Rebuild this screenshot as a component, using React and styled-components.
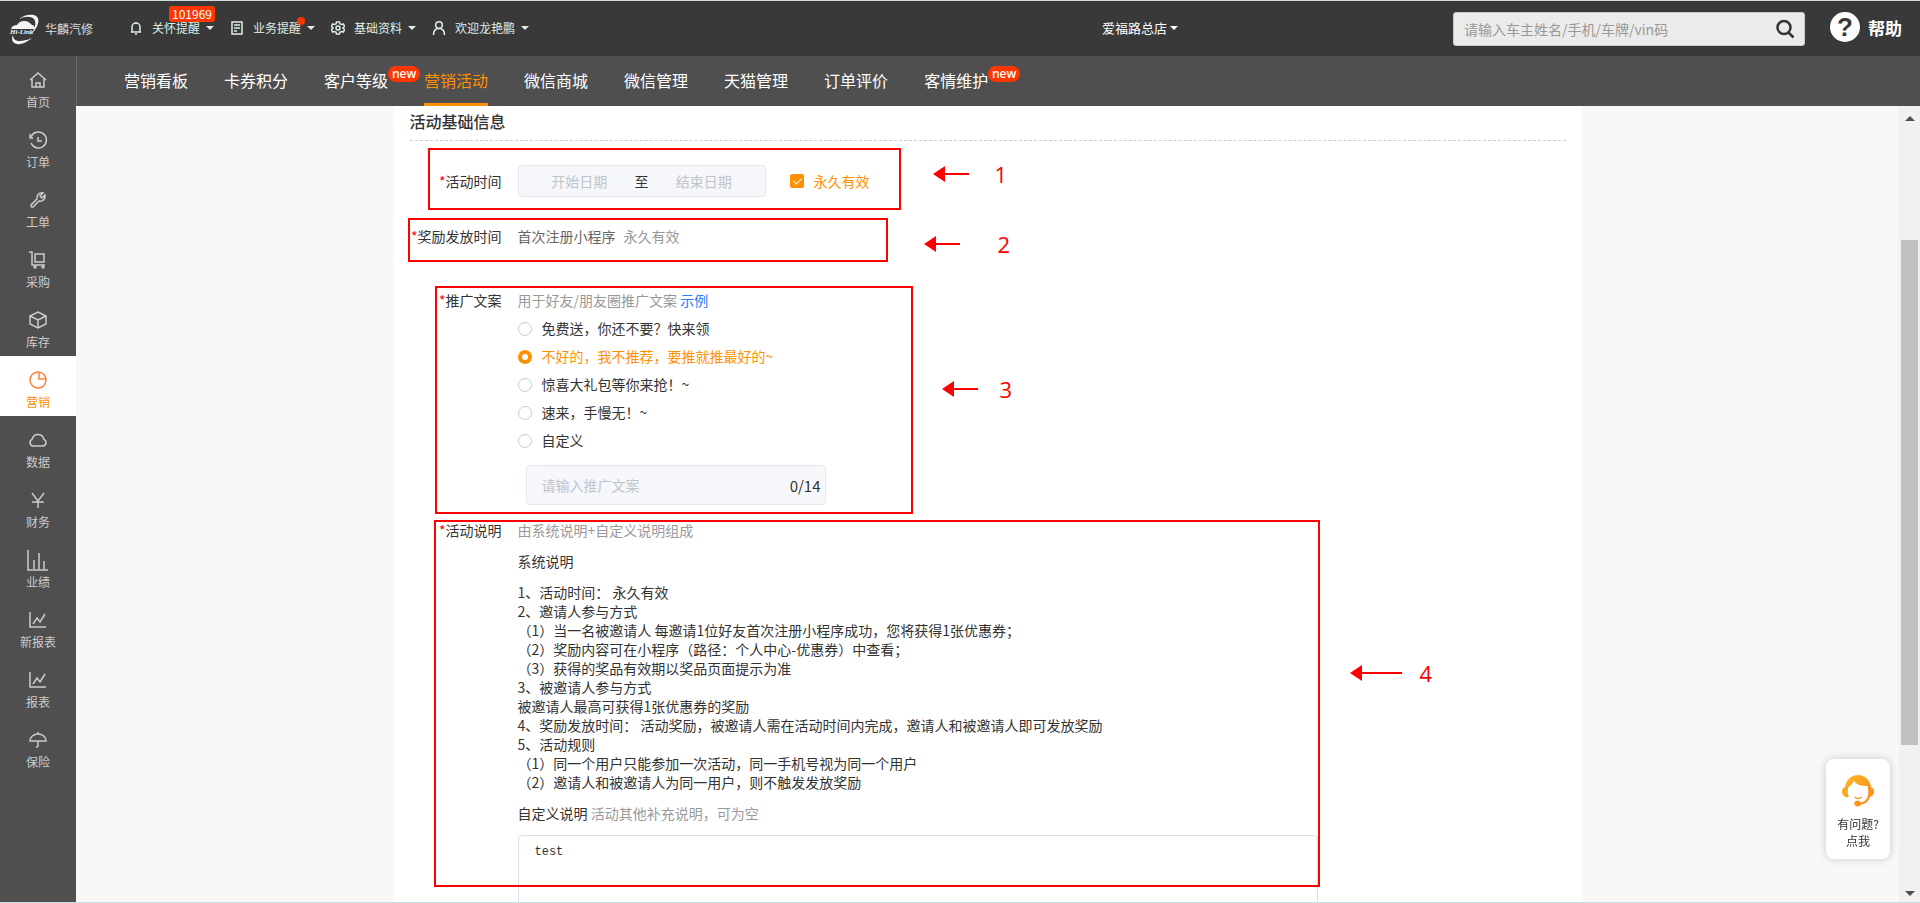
import React, { useState } from 'react';
import styled, { createGlobalStyle, css } from 'styled-components';

const ICONS = {
  home: (
    <>
      <path d="M1 9 9 2l8 7" />
      <path d="M3 8v8h12V8" />
      <path d="M7 16v-4h4v4" />
    </>
  ),
  order: (
    <>
      <path d="M2 6a8 8 0 1 1 0 6" />
      <path d="M1 3v4h3" />
      <path d="M9 6v4h4" />
    </>
  ),
  wrench: (
    <path d="M14 2a5 5 0 0 0-6 6l-6 6a1.6 1.6 0 0 0 2 2l6-6a5 5 0 0 0 6-6l-3 3-2-2z" />
  ),
  cart: (
    <>
      <path d="M0 1h3v13h13" />
      <path d="M6 3h9v8H6z" />
      <circle cx="6" cy="16" r="1" />
      <circle cx="14" cy="16" r="1" />
    </>
  ),
  box: (
    <>
      <path d="m9 1 8 4v8l-8 4-8-4V5z" />
      <path d="m1 5 8 4 8-4M9 9v8" />
    </>
  ),
  pie: (
    <>
      <circle cx="9" cy="9" r="8" />
      <path d="M10 1v7h7" />
    </>
  ),
  cloud: (
    <path d="M4 15a3.5 3.5 0 0 1-1-6.6C4 5 6.5 3.5 9 3.5s5 1.5 6 4.9A3.5 3.5 0 0 1 14 15z" />
  ),
  yen: <path d="m3 2 6 8 6-8M3 11h12M9 10v7" />,
  bars: <path d="M-1-1v20h20M5 18V9M10 18V2M15 18V10" />,
  chart: <path d="M1 1v15h16M4 13l4-6 3 4 5-8" />,
  umbrella: (
    <>
      <path d="M1 10a8 7 0 0 1 16 0z" />
      <path d="M9 1v2M9 10v5a1.5 1.5 0 0 1-2 1" />
    </>
  ),
};

const SIDE_ITEMS = [
  ['home', '首页'],
  ['order', '订单'],
  ['wrench', '工单'],
  ['cart', '采购'],
  ['box', '库存'],
  ['pie', '营销'],
  ['cloud', '数据'],
  ['yen', '财务'],
  ['bars', '业绩'],
  ['chart', '新报表'],
  ['chart', '报表'],
  ['umbrella', '保险'],
];

const TABS = [
  { name: '营销看板' },
  { name: '卡券积分' },
  { name: '客户等级', isNew: true },
  { name: '营销活动', active: true },
  { name: '微信商城' },
  { name: '微信管理' },
  { name: '天猫管理' },
  { name: '订单评价' },
  { name: '客情维护', isNew: true },
];

const SLOGANS = [
  '免费送，你还不要？快来领',
  '不好的，我不推荐，要推就推最好的~',
  '惊喜大礼包等你来抢！~',
  '速来，手慢无！~',
  '自定义',
];

const RULES = [
  '1、活动时间： 永久有效',
  '2、邀请人参与方式',
  '（1）当一名被邀请人 每邀请1位好友首次注册小程序成功，您将获得1张优惠券；',
  '（2）奖励内容可在小程序（路径：个人中心-优惠券）中查看；',
  '（3）获得的奖品有效期以奖品页面提示为准',
  '3、被邀请人参与方式',
  '被邀请人最高可获得1张优惠券的奖励',
  '4、奖励发放时间： 活动奖励，被邀请人需在活动时间内完成，邀请人和被邀请人即可发放奖励',
  '5、活动规则',
  '（1）同一个用户只能参加一次活动，同一手机号视为同一个用户',
  '（2）邀请人和被邀请人为同一用户，则不触发发放奖励',
];

export default function App() {
  const [forever, setForever] = useState(true);
  const [slogan, setSlogan] = useState(1);
  const [custom, setCustom] = useState('');
  const [remark, setRemark] = useState('test');

  return (
    <Page>
      <GlobalStyle />
      <Header />
      <Body>
        <SideBar>
          {SIDE_ITEMS.map(([icon, name]) => (
            <SideItem href="#" key={name} $active={icon === 'pie'}>
              <SideIcon viewBox="0 0 18 18">{ICONS[icon]}</SideIcon>
              {name}
            </SideItem>
          ))}
        </SideBar>
        <Content>
          <TabBar>
            {TABS.map((tab) => (
              <Tab href="#" key={tab.name} $active={tab.active}>
                {tab.name}
                {tab.isNew && <NewBadge>new</NewBadge>}
              </Tab>
            ))}
          </TabBar>
          <Main>
            <Scroll>
              <Panel>
                <Title>活动基础信息</Title>

                <Row $top={24}>
                  <Label $line={32} htmlFor="start">
                    <Star>*</Star>活动时间
                  </Label>
                  <TimeField>
                    <DateRange>
                      <DateInput id="start" placeholder="开始日期" disabled />
                      <span>至</span>
                      <DateInput
                        placeholder="结束日期"
                        aria-label="结束日期"
                        disabled
                      />
                    </DateRange>
                    <CheckLabel>
                      <Check
                        type="checkbox"
                        checked={forever}
                        onChange={(e) => setForever(e.target.checked)}
                      />
                      永久有效
                    </CheckLabel>
                  </TimeField>
                  <Frame $top={-17} $left={18} $width={473} $height={62} />
                  <Callout $top={-6} $left={523} $gap={26}>
                    <Arrow />1
                  </Callout>
                </Row>

                <Row $top={30}>
                  <Label as="span">
                    <Star>*</Star>奖励发放时间
                  </Label>
                  <Inline>
                    <Muted $dark>首次注册小程序</Muted>
                    <Muted>永久有效</Muted>
                  </Inline>
                  <Frame $top={-9} $left={-2} $width={480} $height={44} />
                  <Callout $top={2} $left={514} $gap={38}>
                    <Arrow />2
                  </Callout>
                </Row>

                <Row $top={45}>
                  <Label as="span">
                    <Star>*</Star>推广文案
                  </Label>
                  <div>
                    <Muted>用于好友/朋友圈推广文案</Muted> <Link href="#">示例</Link>
                    <RadioList>
                      {SLOGANS.map((text, i) => (
                        <RadioLabel key={text} $active={slogan === i}>
                          <Radio
                            type="radio"
                            name="slogan"
                            checked={slogan === i}
                            onChange={() => setSlogan(i)}
                          />
                          {text}
                        </RadioLabel>
                      ))}
                    </RadioList>
                    <CustomBox>
                      <CustomInput
                        placeholder="请输入推广文案"
                        aria-label="推广文案"
                        maxLength={14}
                        value={custom}
                        onChange={(e) => setCustom(e.target.value)}
                      />
                      <span>{custom.length}/14</span>
                    </CustomBox>
                  </div>
                  <Frame $top={-5} $left={25} $width={478} $height={228} />
                  <Callout $top={83} $left={532} $gap={22}>
                    <Arrow />3
                  </Callout>
                </Row>

                <Row $top={16}>
                  <Label htmlFor="remark">
                    <Star>*</Star>活动说明
                  </Label>
                  <Explain>
                    <Muted>由系统说明+自定义说明组成</Muted>
                    <p>系统说明</p>
                    <Rules>
                      {RULES.map((rule) => (
                        <li key={rule}>{rule}</li>
                      ))}
                    </Rules>
                    <p>
                      自定义说明 <Muted>活动其他补充说明，可为空</Muted>
                    </p>
                    <Remark
                      id="remark"
                      value={remark}
                      onChange={(e) => setRemark(e.target.value)}
                    />
                  </Explain>
                  <Frame $top={-1} $left={24} $width={886} $height={367} />
                  <Callout $top={137} $left={940} $gap={18}>
                    <Arrow $long />4
                  </Callout>
                </Row>
              </Panel>
            </Scroll>
            <ScrollBar>
              <ScrollButton aria-label="向上">
                <Caret $up />
              </ScrollButton>
              <Track>
                <Thumb />
              </Track>
              <ScrollButton aria-label="向下">
                <Caret />
              </ScrollButton>
            </ScrollBar>
          </Main>
        </Content>
      </Body>
      <Service>
        <ServiceIcon viewBox="0 0 32 32">
          <defs>
            <linearGradient id="hair" x1="0" y1="0" x2="1" y2="1">
              <stop offset="0" stopColor="#fbb829" />
              <stop offset="1" stopColor="#ff8519" />
            </linearGradient>
          </defs>
          <path
            fill="url(#hair)"
            d="M3 12C4 5 9 0 16 0s12 5 13 12c2 1 3 2 3 4.5S31 21 28 22c-2 5-5 7-9 7.5a3.5 3 0 1 1 0-2c3-.5 5-2 6.5-5.5 1-3 1-7 0-11-6 0-11-1-14-5.5C11 9 8 11 6.5 12c-1 3-1 7 .5 9.5l-2 1C1.500 21.5 0 19.5 0 16.500S1 13 3 12z"
          />
          <path
            d="M12.5 22c2 2 5 2 7 0"
            fill="none"
            stroke="#ff9a1f"
            strokeWidth="1.5"
          />
        </ServiceIcon>
        <span>有问题?</span>
        <span>点我</span>
      </Service>
    </Page>
  );
}

function Header() {
  return (
    <TopBar>
      <Logo>
        <LogoMark viewBox="0 0 32 32">
          <path d="M10 6C14 2 21 1 25 2c7 2 6 12-5 21 6-6 8-13 5-17-3-3-9-3-15 0z" />
          <path d="M2 16c1-3 3-4 6-4 2-3 4-4 7-4 4 0 6 2 8 4 2 0 3 2 3 4z" />
          <path d="M4 22c0 5 4 9 19 3-5 4-11 7-15 6-5-1-6-5-4-9z" />
          <text x="1" y="21">
            Hi-Link
          </text>
        </LogoMark>
        华麟汽修
      </Logo>
      <Menu>
        <MenuItem>
          <MenuIcon viewBox="0 0 14 14">
            <path d="M3 11V6a4 4 0 0 1 8 0v5M2 11h10M6 13h2M7 1v1" />
          </MenuIcon>
          关怀提醒
          <Caret />
          <CountBadge>101969</CountBadge>
        </MenuItem>
        <MenuItem>
          <MenuIcon viewBox="0 0 14 14">
            <path d="M2 1h10v12H2zM4 4h6M4 7h6M4 10h3" />
          </MenuIcon>
          业务提醒
          <Caret />
          <Dot />
        </MenuItem>
        <MenuItem>
          <MenuIcon viewBox="0 0 14 14">
            <path d="M5.5 1h3l.5 2 2 .5 1.5-.5 1 2.5L12 7l1.500 1.500-1 2.500-1.500-.5-2 .5-.5 2h-3L5 11l-2-.5-1.500.5-1-2.500L2 7 .5 5.500l1-2.500 1.500.5L5 3z" />
            <circle cx="7" cy="7" r="2" />
          </MenuIcon>
          基础资料
          <Caret />
        </MenuItem>
        <MenuItem>
          <MenuIcon viewBox="0 0 14 14">
            <circle cx="7" cy="4" r="3.3" />
            <path d="M1.5 14c0-4 2-6.5 5.5-6.500s5.500 2.500 5.500 6.500" />
          </MenuIcon>
          欢迎龙艳鹏
          <Caret />
        </MenuItem>
      </Menu>
      <Shop>
        爱福路总店
        <Caret />
      </Shop>
      <Search>
        <SearchInput
          placeholder="请输入车主姓名/手机/车牌/vin码"
          aria-label="搜索"
        />
        <SearchButton aria-label="搜索">
          <svg width="20" height="20" viewBox="0 0 20 20">
            <circle cx="9" cy="8.5" r="6.5" />
            <path d="m13.5 13.5 5 5" />
          </svg>
        </SearchButton>
      </Search>
      <Help href="#">
        <HelpMark>?</HelpMark>
        帮助
      </Help>
    </TopBar>
  );
}

function Arrow({ $long }) {
  const w = $long ? 52 : 36;
  return (
    <svg width={w} height="16" viewBox={`0 0 ${w} 16`}>
      <path d="M0 8 12 0v16z" fill="#f00" />
      <path d={`M10 8H${w}`} stroke="#f00" strokeWidth="2" />
    </svg>
  );
}

const GlobalStyle = createGlobalStyle`
  * {
    box-sizing: border-box;
  }
  body {
    margin: 0;
    font-family: "Noto Sans CJK SC", sans-serif;
    font-size: 14px;
    line-height: 19px;
    color: #333;
  }
  button, input {
    font-family: inherit;
  }
  a {
    text-decoration: none;
  }
`;

const Page = styled.div`
  display: flex;
  flex-direction: column;
  height: 100vh;
  border-top: 1px solid #d5dade;
  border-bottom: 1px solid #c5e3e3;
  overflow: hidden;
`;

const TopBar = styled.header`
  display: flex;
  align-items: center;
  flex: none;
  height: 55px;
  padding: 0 18px 0 9px;
  background-color: #393939;
  color: #ddeee8;
`;

const Logo = styled.div`
  display: flex;
  align-items: center;
  gap: 4px;
  width: 120px;
  font-size: 12px;
  color: #ddd;
`;

const LogoMark = styled.svg`
  width: 32px;
  height: 32px;
  fill: #f4f4f4;

  text {
    font: italic bold 7px 'Liberation Serif', serif;
  }
`;

const Menu = styled.nav`
  display: flex;
  gap: 16px;
  padding-bottom: 2px;
`;

const MenuItem = styled.button`
  position: relative;
  display: flex;
  align-items: center;
  padding: 0;
  border: 0;
  background: none;
  font-size: 12px;
  line-height: 20px;
  color: inherit;
`;

const MenuIcon = styled.svg`
  width: 14px;
  height: 14px;
  margin-right: 9px;
  fill: none;
  stroke: currentColor;
  stroke-width: 1.5;
`;

const Caret = styled.i`
  margin-left: 6px;
  border: 4px solid transparent;
  border-top-color: currentColor;
  border-bottom-width: 0;
  ${(props) =>
    props.$up &&
    css`
      transform: rotate(180deg);
    `}
`;

const CountBadge = styled.span`
  position: absolute;
  top: -12px;
  left: 40px;
  padding: 0 3px;
  border-radius: 3px;
  background-color: #ff3600;
  line-height: 16px;
  color: #fff;
`;

const Dot = styled.span`
  position: absolute;
  top: -1px;
  right: 10px;
  width: 8px;
  height: 8px;
  border-radius: 50%;
  background-color: #ff3600;
`;

const Shop = styled.button`
  display: flex;
  align-items: center;
  margin: 0 275px 0 auto;
  padding: 0 0 2px;
  border: 0;
  background: none;
  font-size: 13px;
  color: #fff;

  ${Caret} {
    margin-left: 3px;
  }
`;

const Search = styled.div`
  display: flex;
  align-items: center;
  width: 352px;
  height: 34px;
  border: 1px solid #ccc;
  border-radius: 3px;
  background-color: #ebebeb;
`;

const SearchInput = styled.input`
  flex: 1;
  min-width: 0;
  padding: 0 10px;
  border: 0;
  background: none;
  font-size: 14px;

  &::placeholder {
    color: #999;
  }
`;

const SearchButton = styled.button`
  display: flex;
  padding: 0 9px;
  border: 0;
  background: none;

  svg {
    fill: none;
    stroke: #333;
    stroke-width: 2.5;
  }
`;

const Help = styled.a`
  display: flex;
  align-items: center;
  gap: 8px;
  margin-left: 25px;
  padding-bottom: 3px;
  font-size: 17px;
  font-weight: bold;
  color: #fff;
`;

const HelpMark = styled.span`
  width: 30px;
  height: 30px;
  border-radius: 50%;
  background-color: #fff;
  font: bold 26px/30px 'Liberation Sans', sans-serif;
  text-align: center;
  color: #393939;
`;

const Body = styled.div`
  display: flex;
  flex: 1;
  min-height: 0;
`;

const SideBar = styled.nav`
  flex: none;
  width: 76px;
  background-color: #4f4f4f;
`;

const SideIcon = styled.svg`
  flex: none;
  width: 18px;
  height: 18px;
  overflow: visible;
  fill: none;
  stroke: currentColor;
  stroke-width: 1.5;
`;

const SideItem = styled.a`
  display: flex;
  flex-direction: column;
  align-items: center;
  gap: 3px;
  height: 60px;
  padding-top: 15px;
  font-size: 12px;
  line-height: 20px;
  color: ${(props) => (props.$active ? '#ff9100' : '#ccc')};
  background-color: ${(props) => (props.$active ? '#fff' : 'transparent')};

  ${SideIcon} {
    color: ${(props) => (props.$active ? '#ff7f3a' : 'inherit')};
  }
`;

const Content = styled.div`
  display: flex;
  flex-direction: column;
  flex: 1;
  min-width: 0;
`;

const TabBar = styled.nav`
  display: flex;
  flex: none;
  gap: 36px;
  height: 50px;
  padding-left: 47px;
  border-left: 1px solid #6b6b6b;
  background-color: #4f4f4f;
`;

const Tab = styled.a`
  position: relative;
  border-bottom: 3px solid ${(props) => (props.$active ? '#ff9100' : 'transparent')};
  font-size: 16px;
  line-height: 48px;
  color: ${(props) => (props.$active ? '#ff9100' : '#fff')};
`;

const NewBadge = styled.span`
  position: absolute;
  top: 10px;
  left: 100%;
  width: 32px;
  border-radius: 8px;
  background-color: #ff3600;
  font: 600 12px/16px 'Open Sans', sans-serif;
  text-align: center;
  color: #fff;
`;

const Main = styled.main`
  display: flex;
  flex: 1;
  min-height: 0;
  background-color: #f8f8f8;
`;

const Scroll = styled.div`
  flex: 1;
  overflow: hidden;
`;

const Panel = styled.section`
  max-width: 1188px;
  margin: 0 auto;
  padding: 3px 16px 0;
  background-color: #fff;
`;

const Title = styled.h2`
  margin: 0;
  padding-bottom: 7px;
  border-bottom: 1px dashed #ccc;
  font-size: 16px;
  font-weight: 500;
  line-height: 24px;
`;

const Row = styled.div`
  position: relative;
  display: flex;
  margin-top: ${(props) => props.$top}px;
`;

const Label = styled.label`
  flex: none;
  width: 92px;
  margin-right: 16px;
  line-height: ${(props) => props.$line || 19}px;
  text-align: right;
`;

const Star = styled.span`
  color: #f00;
`;

const TimeField = styled.div`
  display: flex;
  align-items: center;
  gap: 24px;
`;

const DateRange = styled.div`
  display: flex;
  align-items: center;
  justify-content: space-around;
  width: 248px;
  height: 32px;
  padding: 0 9px;
  border: 1px solid #e4e7ed;
  border-radius: 4px;
  background-color: #f5f7fa;
`;

const DateInput = styled.input`
  width: 96px;
  padding: 0;
  border: 0;
  background: none;
  font-size: 14px;
  text-align: center;

  &::placeholder {
    color: #c0c4cc;
  }
`;

const CheckLabel = styled.label`
  display: flex;
  align-items: center;
  gap: 10px;
  color: #ff9100;
`;

const Check = styled.input`
  appearance: none;
  width: 14px;
  height: 14px;
  margin: 0;
  border: 1px solid #ff9100;
  border-radius: 2px;

  &:checked {
    background-color: #ff9100;
  }
  &:checked::after {
    content: '';
    display: block;
    width: 4px;
    height: 7px;
    margin: 1px 4px;
    border: solid #fff;
    border-width: 0 1px 1px 0;
    transform: rotate(45deg);
  }
`;

const Inline = styled.div`
  display: flex;
  gap: 8px;
`;

const Muted = styled.span`
  color: ${(props) => (props.$dark ? '#666' : '#999')};
`;

const Link = styled.a`
  color: #2a7bff;
`;

const RadioList = styled.div`
  display: flex;
  flex-direction: column;
  gap: 9px;
  margin-top: 9px;
`;

const RadioLabel = styled.label`
  display: flex;
  align-items: center;
  gap: 10px;
  color: ${(props) => (props.$active ? '#ff9100' : '#333')};
`;

const Radio = styled.input`
  appearance: none;
  width: 14px;
  height: 14px;
  margin: 0;
  border: 1px solid #ccc;
  border-radius: 50%;

  &:checked {
    border: 4px solid #ff9100;
  }
`;

const CustomBox = styled.div`
  display: flex;
  align-items: center;
  width: 300px;
  height: 40px;
  margin: 15px 0 0 8px;
  padding: 0 4px 0 15px;
  border: 1px solid #e4e7ed;
  border-radius: 4px;
  background-color: #f5f7fa;
  font-size: 15px;
`;

const CustomInput = styled.input`
  flex: 1;
  min-width: 0;
  padding: 0;
  border: 0;
  background: none;
  font-size: 14px;

  &::placeholder {
    color: #c0c4cc;
  }
`;

const Explain = styled.div`
  flex: 1;
  max-width: 800px;

  p {
    margin: 12px 0;
  }
`;

const Rules = styled.ul`
  margin: 0;
  padding: 0;
  list-style: none;
`;

const Remark = styled.textarea`
  display: block;
  width: 100%;
  height: 120px;
  padding: 8px 16px;
  border: 1px solid #dcdfe6;
  border-radius: 4px;
  font: 12px/16px 'Liberation Mono', monospace;
  color: #333;
  resize: none;
`;

const Frame = styled.div`
  position: absolute;
  top: ${(props) => props.$top}px;
  left: ${(props) => props.$left}px;
  width: ${(props) => props.$width}px;
  height: ${(props) => props.$height}px;
  border: 2px solid #f00;
  pointer-events: none;
`;

const Callout = styled.div`
  position: absolute;
  top: ${(props) => props.$top}px;
  left: ${(props) => props.$left}px;
  display: flex;
  align-items: center;
  gap: ${(props) => props.$gap}px;
  font: 22px/30px 'Open Sans', sans-serif;
  color: #f00;
`;

const ScrollBar = styled.div`
  display: flex;
  flex-direction: column;
  flex: none;
  width: 21px;
  background-color: #f1f1f1;
`;

const ScrollButton = styled.button`
  height: 21px;
  padding: 0;
  border: 0;
  background: none;
  color: #505050;

  ${Caret} {
    display: inline-block;
    margin: 0;
    border-width: 5px;
    border-bottom-width: 0;
    vertical-align: middle;
  }
`;

const Track = styled.div`
  flex: 1;
  padding: 0 2px;
`;

const Thumb = styled.div`
  position: relative;
  top: 15%;
  height: 67%;
  background-color: #c1c1c1;
`;

const Service = styled.aside`
  position: fixed;
  right: 30px;
  bottom: 44px;
  display: flex;
  flex-direction: column;
  align-items: center;
  width: 64px;
  padding: 16px 0 10px;
  border-radius: 8px;
  background-color: #fff;
  box-shadow: 0 0 8px rgba(0, 0, 0, 0.2);
  font-size: 12px;
  line-height: 17px;
`;

const ServiceIcon = styled.svg`
  width: 32px;
  height: 32px;
  margin-bottom: 8px;
`;
